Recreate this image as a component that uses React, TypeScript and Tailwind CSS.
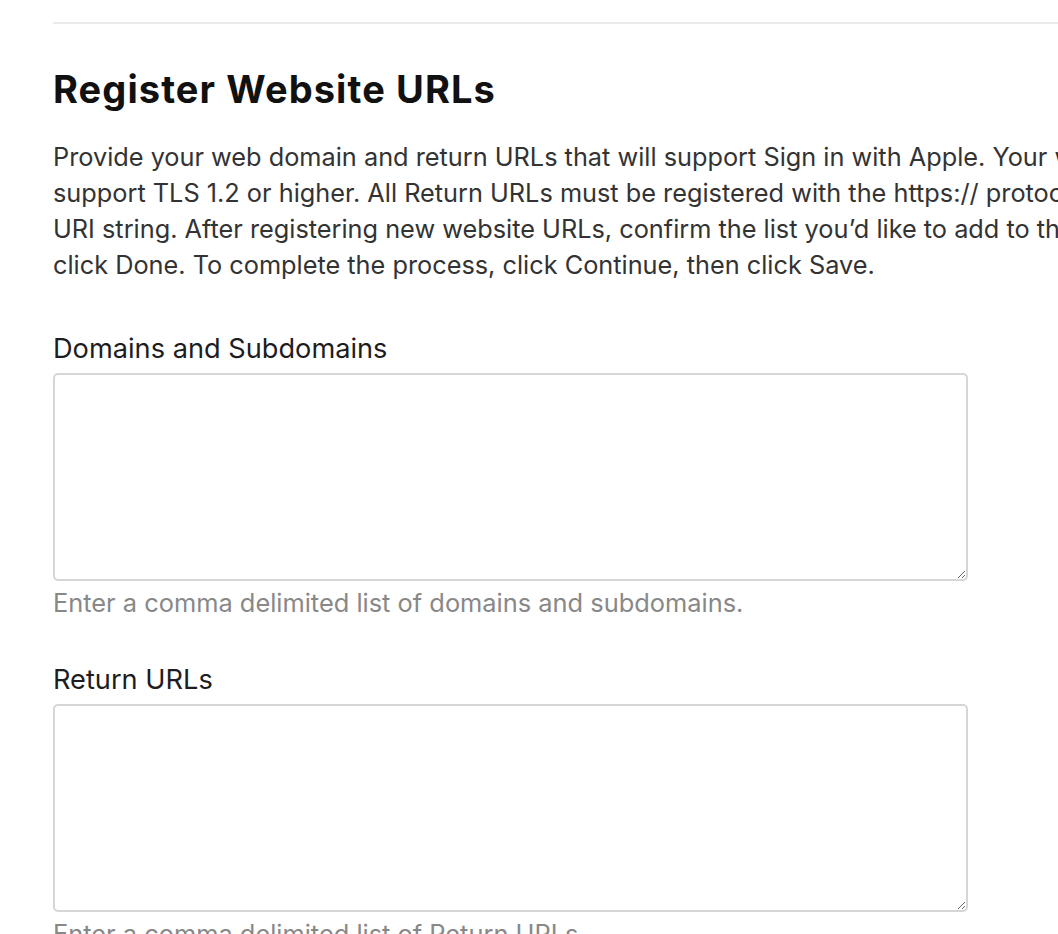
export default function App() {
  return (
    <div className="w-[1058px] h-[934px] overflow-hidden bg-white" style={{ fontFamily: 'Inter, "Liberation Sans", sans-serif' }}>
      <div className="ml-[53px] w-[1300px] pt-[22px]">
        <div className="h-[2px] bg-[#ebebeb]"></div>

        <h1 className="mt-[43px] text-[38px] leading-[44px] font-bold text-[#111111] tracking-[1.1px]">
          Register Website URLs
        </h1>

        <p className="mt-[28px] text-[25.3px] leading-[36px] text-[#333333] whitespace-nowrap">
          <span className="block">Provide your web domain and return URLs that will support Sign in with Apple. Your website must</span>
          <span className="block">support TLS 1.2 or higher. All Return URLs must be registered with the https:// protocol included in the</span>
          <span className="block">URI string. After registering new website URLs, confirm the list you’d like to add to the App ID and</span>
          <span className="block">click Done. To complete the process, click Continue, then click Save.</span>
        </p>

        <div className="mt-[48px] w-[915px]">
          <label className="block text-[27.2px] leading-[36px] text-[#1d1d1f]">Domains and Subdomains</label>
          <textarea className="mt-[6px] block w-full h-[208px] border-2 border-[#d6d6d6] rounded-[5px] bg-white"></textarea>
          <p className="mt-[4px] text-[25.4px] leading-[36px] text-[#888888]">
            Enter a comma delimited list of domains and subdomains.
          </p>
        </div>

        <div className="mt-[41px] w-[915px]">
          <label className="block text-[27.2px] leading-[36px] text-[#1d1d1f]">Return URLs</label>
          <textarea className="mt-[6px] block w-full h-[208px] border-2 border-[#d6d6d6] rounded-[5px] bg-white"></textarea>
          <p className="mt-[4px] text-[25.4px] leading-[36px] text-[#888888]">
            Enter a comma delimited list of Return URLs.
          </p>
        </div>
      </div>
    </div>
  );
}
